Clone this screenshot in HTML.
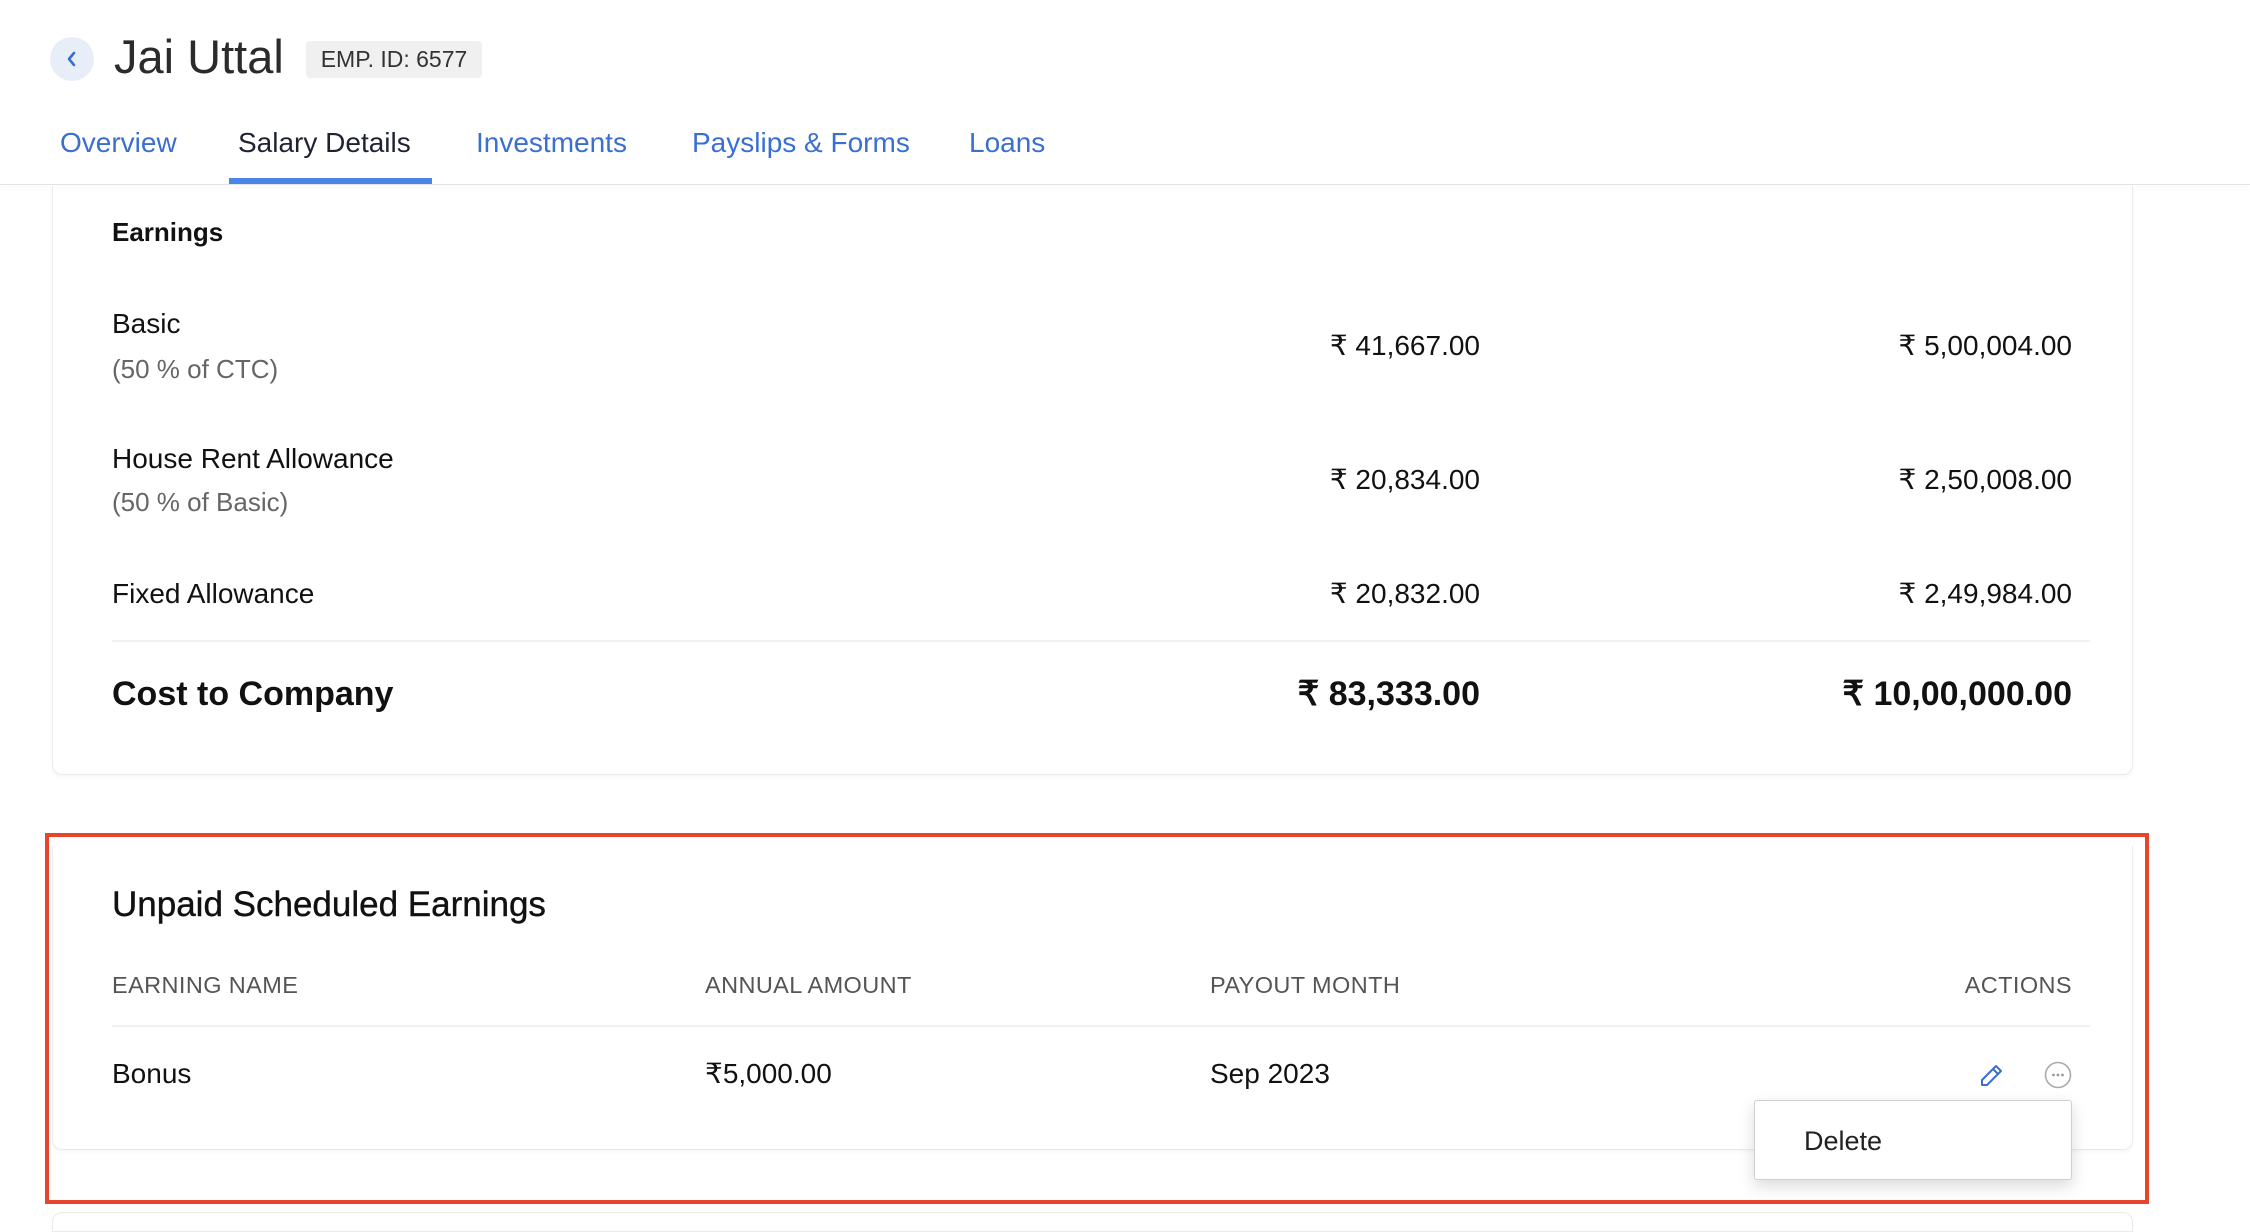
<!DOCTYPE html>
<html><head><meta charset="utf-8"><style>
*{margin:0;padding:0;box-sizing:border-box}
body{width:2250px;height:1222px;overflow:hidden;background:#fff;font-family:"Liberation Sans",sans-serif;color:#111;position:relative}
.a{position:absolute;white-space:nowrap}
.r{text-align:right}
.tab{position:absolute;top:124px;font-size:28px;color:#3a6fd1;line-height:38px}
.lbl{font-size:28px;color:#111;line-height:34px}
.sub{font-size:26px;color:#666;line-height:34px}
.amt{font-size:28px;color:#111;line-height:34px}
.hd{font-size:23.5px;color:#555;line-height:30px;letter-spacing:.4px}
</style></head><body>
<div class="a" style="left:50px;top:37px;width:44px;height:44px;border-radius:50%;background:#e8eef8"></div>
<svg class="a" style="left:62px;top:49px" width="20" height="20" viewBox="0 0 20 20"><path d="M12 4 L7 10 L12 16" fill="none" stroke="#3a6fd1" stroke-width="2.6" stroke-linecap="round" stroke-linejoin="round"/></svg>
<div class="a" style="left:114px;top:29px;font-size:47px;line-height:56px;color:#2b2b2b">Jai Uttal</div>
<div class="a" style="left:306px;top:41px;width:176px;height:37px;background:#f0f0f0;border-radius:4px;font-size:23px;line-height:37px;color:#333;text-align:center">EMP. ID: 6577</div>
<div class="tab" style="left:60px">Overview</div>
<div class="tab" style="left:238px;color:#1f2233">Salary Details</div>
<div class="tab" style="left:476px">Investments</div>
<div class="tab" style="left:692px">Payslips &amp; Forms</div>
<div class="tab" style="left:969px">Loans</div>
<div class="a" style="left:229px;top:178px;width:203px;height:6px;background:#4a86e8"></div>
<div class="a" style="left:0;top:184px;width:2250px;height:1px;background:#e4e4e4;box-shadow:0 2px 6px rgba(0,0,0,.08)"></div>
<div class="a" style="left:52px;top:186px;width:2081px;height:589px;border:1px solid #eaeaea;border-top:none;border-radius:0 0 10px 10px;box-shadow:0 2px 4px rgba(0,0,0,.04)"></div>
<div class="a" style="left:112px;top:215px;font-size:26px;font-weight:bold;line-height:34px">Earnings</div>
<div class="a lbl" style="left:112px;top:307px">Basic</div>
<div class="a sub" style="left:112px;top:352px">(50 % of CTC)</div>
<div class="a amt r" style="right:770px;top:329px">₹ 41,667.00</div>
<div class="a amt r" style="right:178px;top:329px">₹ 5,00,004.00</div>
<div class="a lbl" style="left:112px;top:442px">House Rent Allowance</div>
<div class="a sub" style="left:112px;top:485px">(50 % of Basic)</div>
<div class="a amt r" style="right:770px;top:463px">₹ 20,834.00</div>
<div class="a amt r" style="right:178px;top:463px">₹ 2,50,008.00</div>
<div class="a lbl" style="left:112px;top:577px">Fixed Allowance</div>
<div class="a amt r" style="right:770px;top:577px">₹ 20,832.00</div>
<div class="a amt r" style="right:178px;top:577px">₹ 2,49,984.00</div>
<div class="a" style="left:112px;top:640px;width:1978px;height:2px;background:#f0f0f0"></div>
<div class="a" style="left:112px;top:673px;font-size:34px;font-weight:bold;line-height:42px">Cost to Company</div>
<div class="a r" style="right:770px;top:673px;font-size:34px;font-weight:bold;line-height:42px">₹ 83,333.00</div>
<div class="a r" style="right:178px;top:673px;font-size:34px;font-weight:bold;line-height:42px">₹ 10,00,000.00</div>
<div class="a" style="left:52px;top:846px;width:2081px;height:304px;border:1px solid #eaeaea;border-top:none;border-radius:0 0 10px 10px;box-shadow:0 2px 4px rgba(0,0,0,.04)"></div>
<div class="a" style="left:112px;top:884px;font-size:35px;line-height:42px;color:#111;-webkit-text-stroke:0.4px #111">Unpaid Scheduled Earnings</div>
<div class="a hd" style="left:112px;top:970px">EARNING NAME</div>
<div class="a hd" style="left:705px;top:970px">ANNUAL AMOUNT</div>
<div class="a hd" style="left:1210px;top:970px">PAYOUT MONTH</div>
<div class="a hd r" style="right:178px;top:970px">ACTIONS</div>
<div class="a" style="left:112px;top:1025px;width:1978px;height:2px;background:#f0f0f0"></div>
<div class="a amt" style="left:112px;top:1057px">Bonus</div>
<div class="a amt" style="left:705px;top:1057px">₹5,000.00</div>
<div class="a amt" style="left:1210px;top:1057px">Sep 2023</div>
<svg class="a" style="left:1978px;top:1061px" width="28" height="28" viewBox="0 0 28 28"><path d="M4 24 L4 19 L18 5 L23 10 L9 24 Z M15 8 L20 13" fill="none" stroke="#3a6fd1" stroke-width="2" stroke-linejoin="round"/></svg>
<svg class="a" style="left:2044px;top:1061px" width="28" height="28" viewBox="0 0 28 28"><circle cx="14" cy="14" r="12.5" fill="none" stroke="#aaa" stroke-width="1.6"/><circle cx="9.5" cy="14" r="1.4" fill="#999"/><circle cx="14" cy="14" r="1.4" fill="#999"/><circle cx="18.5" cy="14" r="1.4" fill="#999"/></svg>
<div class="a" style="left:1754px;top:1100px;width:318px;height:80px;background:#fff;border:1px solid #cfcfcf;border-radius:3px;box-shadow:0 6px 16px rgba(0,0,0,.15)"></div>
<div class="a" style="left:1804px;top:1124px;font-size:27px;line-height:34px;color:#222">Delete</div>
<div class="a" style="left:52px;top:1212px;width:2081px;height:20px;border:1px solid #eaeaea;border-radius:10px 10px 0 0"></div>
<div class="a" style="left:45px;top:833px;width:2104px;height:371px;border:4px solid #e8432c"></div>
</body></html>
